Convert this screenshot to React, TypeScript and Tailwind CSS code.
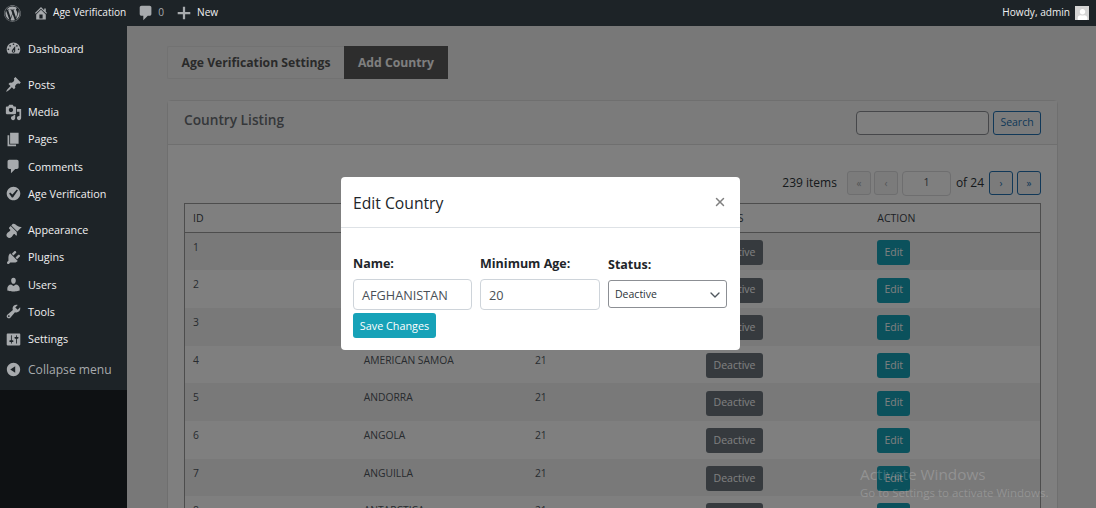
import React from "react";
import { X, ChevronDown } from "lucide-react";
import { FaWordpress, FaUser } from "react-icons/fa";

// dashicons, 20x20 box
const PATHS = {
  home: "M16 8.5l1.53 1.53-1.06 1.06L10 4.62l-6.47 6.47-1.06-1.06L10 2.5l4 4v-2h2v4zm-6-2.46l6 5.99V18H4v-5.97zM12 17v-5H8v5h4z",
  comment: "M5 2h9c1.1 0 2 .9 2 2v7c0 1.1-.9 2-2 2h-2l-5 5v-5H5c-1.1 0-2-.9-2-2V4c0-1.1.9-2 2-2z",
  plus: "M17 8.75v2.5h-5.75V17h-2.5v-5.75H3v-2.5h5.75V3h2.5v5.75H17z",
  dashboard:
    "M3.76 16h12.48c1.1-1.37 1.76-3.11 1.76-5 0-4.42-3.58-8-8-8s-8 3.58-8 8c0 1.89.66 3.63 1.76 5zM10 4c.55 0 1 .45 1 1s-.45 1-1 1-1-.45-1-1 .45-1 1-1zM6 6c.55 0 1 .45 1 1s-.45 1-1 1-1-.45-1-1 .45-1 1-1zm8 0c.55 0 1 .45 1 1s-.45 1-1 1-1-.45-1-1 .45-1 1-1zm-5.37 5.55L12 7v6c0 1.1-.9 2-2 2s-2-.9-2-2c0-.57.24-1.08.63-1.45zM4 10c.55 0 1 .45 1 1s-.45 1-1 1-1-.45-1-1 .45-1 1-1zm12 0c.55 0 1 .45 1 1s-.45 1-1 1-1-.45-1-1 .45-1 1-1zm-5 3c0-.55-.45-1-1-1s-1 .45-1 1 .45 1 1 1 1-.45 1-1z",
  post: "M10.44 3.02l1.82-1.82 6.36 6.35-1.83 1.82c-1.05-.68-2.48-.57-3.41.36l-.75.75c-.92.93-1.04 2.35-.35 3.41l-1.83 1.82-2.41-2.41-2.8 2.79c-.42.42-3.38 2.71-3.8 2.29s1.86-3.39 2.28-3.81l2.79-2.79L4.1 9.36l1.83-1.82c1.05.69 2.48.57 3.4-.36l.75-.75c.93-.92 1.05-2.35.36-3.41z",
  media:
    "M13 11V4c0-.55-.45-1-1-1h-1.67L9 1H5L3.67 3H2c-.55 0-1 .45-1 1v7c0 .55.45 1 1 1h10c.55 0 1-.45 1-1zM7 4.5c1.38 0 2.5 1.12 2.5 2.5S8.38 9.5 7 9.5 4.5 8.38 4.5 7 5.62 4.5 7 4.5zM14 6h5v10.5c0 1.38-1.12 2.5-2.5 2.5S14 17.88 14 16.5s1.12-2.5 2.5-2.5c.17 0 .34.02.5.05V9h-3V6zm-4 8.05V13h2v3.5c0 1.38-1.12 2.5-2.5 2.5S7 17.88 7 16.5 8.12 14 9.5 14c.17 0 .34.02.5.05z",
  page: "M6 15V2h10v13H6zm-1 1h8v2H3V5h2v11z",
  check:
    "M10 2c-4.42 0-8 3.58-8 8s3.58 8 8 8 8-3.58 8-8-3.58-8-8-8zm-.615 12.66h-1.34l-3.24-4.54 1.34-1.25 2.57 2.4 5.14-5.93 1.34.94-5.81 8.38z",
  appearance:
    "M14.48 11.06L7.41 3.99l1.5-1.5c.5-.56 2.3-.47 3.51.32 1.21.8 1.43 1.28 2.91 2.1 1.18.64 2.45 1.26 4.45.85zm-.71.71L6.7 4.7 4.93 6.47c-.39.39-.39 1.02 0 1.41l1.06 1.06c.39.39.39 1.03 0 1.42-.6.6-1.43 1.11-2.21 1.69-.35.26-.7.53-1.01.84-1.43 1.43-1.4 3.52-.04 4.88 1.36 1.36 3.45 1.39 4.88-.04.31-.31.58-.66.84-1.01.58-.78 1.09-1.61 1.69-2.21.39-.39 1.03-.39 1.42 0l1.06 1.06c.39.39 1.02.39 1.41 0z",
  plugins:
    "M13.11 4.36L9.87 7.6 8 5.73l3.24-3.24c.35-.34 1.05-.2 1.56.32.52.51.66 1.21.31 1.55zm-8 1.77l.91-1.12 9.01 9.01-1.19.84c-.71.71-2.63 1.16-3.82 1.16H6.14L4.9 17.26c-.59.59-1.54.59-2.12 0-.59-.58-.59-1.53 0-2.12l1.24-1.24v-3.88c0-1.13.4-3.19 1.09-3.89zm7.26 3.97l3.24-3.24c.34-.35 1.04-.21 1.55.31.52.51.66 1.21.31 1.55l-3.24 3.25z",
  users:
    "M10 9.25c-2.27 0-2.73-3.44-2.73-3.44C7 4.02 7.82 2 9.97 2c2.16 0 2.98 2.02 2.71 3.81 0 0-.41 3.44-2.68 3.44zm0 2.57L12.72 10c2.39 0 4.52 2.33 4.52 4.53v2.49s-3.65 1.13-7.24 1.13c-3.65 0-7.24-1.13-7.24-1.13v-2.49c0-2.25 1.94-4.48 4.47-4.48z",
  tools:
    "M16.68 9.77c-1.34 1.34-3.3 1.67-4.95.99l-5.41 6.52c-.99.99-2.59.99-3.58 0s-.99-2.59 0-3.57l6.52-5.42c-.68-1.65-.35-3.61.99-4.95 1.28-1.28 3.12-1.62 4.72-1.06l-2.89 2.89 2.82 2.82 2.86-2.87c.53 1.58.18 3.39-1.08 4.65zM3.81 16.21c.4.39 1.04.39 1.43 0 .4-.4.4-1.04 0-1.43-.39-.4-1.03-.4-1.43 0-.39.39-.39 1.03 0 1.43z",
  settings:
    "M18 16V4c0-.55-.45-1-1-1H3c-.55 0-1 .45-1 1v12c0 .55.45 1 1 1h14c.55 0 1-.45 1-1zM8 11h1c.55 0 1 .45 1 1s-.45 1-1 1H8v1.5c0 .28-.22.5-.5.5s-.5-.22-.5-.5V13H6c-.55 0-1-.45-1-1s.45-1 1-1h1V5.5c0-.28.22-.5.5-.5s.5.22.5.5V11zm5-2h-1c-.55 0-1-.45-1-1s.45-1 1-1h1V5.5c0-.28.22-.5.5-.5s.5.22.5.5V7h1c.55 0 1 .45 1 1s-.45 1-1 1h-1v5.5c0 .28-.22.5-.5.5s-.5-.22-.5-.5V9z",
  collapse: "M10 2.16c4.33 0 7.84 3.51 7.84 7.84s-3.51 7.84-7.84 7.84S2.16 14.33 2.16 10 5.71 2.16 10 2.16zm2 11.72V6.12L6.18 9.97z",
};

type IconName = keyof typeof PATHS;

function Dashicon({ name, className }: { name: IconName; className?: string }) {
  return (
    <svg viewBox="0 0 20 20" fill="currentColor" className={className}>
      <path d={PATHS[name]} />
    </svg>
  );
}

const MENU_TOP: { label: string; icon: IconName }[] = [{ label: "Dashboard", icon: "dashboard" }];
const MENU_CONTENT: { label: string; icon: IconName }[] = [
  { label: "Posts", icon: "post" },
  { label: "Media", icon: "media" },
  { label: "Pages", icon: "page" },
  { label: "Comments", icon: "comment" },
  { label: "Age Verification", icon: "check" },
];
const MENU_ADMIN: { label: string; icon: IconName }[] = [
  { label: "Appearance", icon: "appearance" },
  { label: "Plugins", icon: "plugins" },
  { label: "Users", icon: "users" },
  { label: "Tools", icon: "tools" },
  { label: "Settings", icon: "settings" },
];

// names of rows 1-3 sit behind the modal
const ROWS = [
  { id: 1, name: "", age: "" },
  { id: 2, name: "", age: "" },
  { id: 3, name: "", age: "" },
  { id: 4, name: "AMERICAN SAMOA", age: "21" },
  { id: 5, name: "ANDORRA", age: "21" },
  { id: 6, name: "ANGOLA", age: "21" },
  { id: 7, name: "ANGUILLA", age: "21" },
  { id: 8, name: "ANTARCTICA", age: "21" },
];

function MenuGroup({ items }: { items: { label: string; icon: IconName }[] }) {
  return (
    <ul className="mb-[9px]">
      {items.map(({ label, icon }) => (
        <li key={label} className="flex h-[27.25px] items-center text-[10.8px] text-[#f0f0f1]">
          <span className="flex w-[28px] pl-[5px]">
            <Dashicon name={icon} className="h-[17px] w-[17px] text-[#a7aaad]" />
          </span>
          <span>{label}</span>
        </li>
      ))}
    </ul>
  );
}

function PageButton({ children, on }: { children: string; on?: boolean }) {
  return (
    <span
      className={`flex h-[24px] w-[24px] items-center justify-center rounded-[3px] border text-[10px] ${
        on ? "border-[#2271b1] bg-[#f6f7f7] text-[#2271b1]" : "border-[#dcdcde] bg-[#f6f7f7] text-[#a7aaad]"
      }`}
    >
      {children}
    </span>
  );
}

export default function App() {
  return (
    <div className="relative h-[508px] w-[1096px] overflow-hidden bg-[#f0f0f1] font-['Open_Sans','Noto_Sans',sans-serif] text-[#212529]">
      {/* Page under the dim layer */}
      <div className="flex h-full pt-[26px]">
        <div className="w-[127px] shrink-0 bg-[#1d2327]" />
        <main className="min-w-0 flex-1 pl-[40px] pr-[38px] pt-[20px]">
          <div className="flex h-[33px] w-fit text-[12.2px] font-bold">
            <span className="flex w-[177px] items-center justify-center rounded-l-[2px] border border-r-0 border-[#e4e4e4] bg-[#f3f3f3] pt-[2px] text-[#555555]">
              Age Verification Settings
            </span>
            <span className="flex w-[104px] items-center justify-center bg-[#5a5a5a] pt-[2px] text-white">Add Country</span>
          </div>

          <section className="mt-[21px] rounded-t-[4px] border border-[#dfdfdf] bg-white">
            <header className="flex h-[44px] items-center justify-between border-b border-[#dfdfdf] bg-[#f7f7f7] pl-[16px] pr-[16px]">
              <h2 className="pb-[5px] text-[13.7px] font-semibold text-[#6a6f74]">Country Listing</h2>
              <div className="flex gap-[4px]">
                <span className="h-[24px] w-[133px] rounded-[4px] border border-[#8c8f94] bg-white" />
                <span className="flex h-[24px] w-[48px] items-center justify-center rounded-[3px] border border-[#2271b1] bg-[#f6f7f7] text-[10.5px] text-[#2271b1]">
                  Search
                </span>
              </div>
            </header>

            <div className="px-[16px] pt-[26px]">
              <div className="flex h-[24px] items-center justify-end text-[12px] text-[#2c3338]">
                <span className="mr-[10px]">239 items</span>
                <span className="flex gap-[3px]">
                  <PageButton>«</PageButton>
                  <PageButton>‹</PageButton>
                </span>
                <span className="ml-[4px] flex h-[25px] w-[49px] items-center justify-center rounded-[4px] border border-[#dcdcde] bg-white text-[10.5px] text-[#50575e]">
                  1
                </span>
                <span className="mx-[5px]">of 24</span>
                <span className="flex gap-[4px]">
                  <PageButton on>›</PageButton>
                  <PageButton on>»</PageButton>
                </span>
              </div>

              <table className="mt-[8px] w-full table-fixed border border-[#9a9a9a] text-[10.3px] text-[#50575e]">
                <thead>
                  <tr className="h-[29px] border-b border-[#9a9a9a] text-left text-[10.5px] text-[#3c434a]">
                    <th className="pl-[8px] pt-[2px] font-normal">ID</th>
                    <th className="pl-[8px] pt-[2px] font-normal">NAME</th>
                    <th className="pl-[8px] pt-[2px] font-normal">MINIMUM AGE</th>
                    <th className="pl-[8px] pt-[2px] font-normal">STATUS</th>
                    <th className="pl-[8px] pt-[2px] font-normal">ACTION</th>
                  </tr>
                </thead>
                <tbody>
                  {ROWS.map((row) => (
                    <tr key={row.id} className="h-[37.7px] odd:bg-[#f2f2f2]">
                      <td className="pl-[8px] pb-[8px]">{row.id}</td>
                      <td className="pl-[8px] pb-[8px]">{row.name}</td>
                      <td className="pl-[8px] pb-[8px]">{row.age}</td>
                      <td className="pl-[8px] pt-[2px]">
                        <span className="inline-flex h-[25px] w-[57px] items-center justify-center rounded-[3px] bg-[#6c757d] text-[10.5px] text-white">
                          Deactive
                        </span>
                      </td>
                      <td className="pl-[8px] pt-[2px]">
                        <span className="inline-flex h-[25px] w-[33px] items-center justify-center rounded-[3px] bg-[#17a2b8] text-[10.5px] text-white">
                          Edit
                        </span>
                      </td>
                    </tr>
                  ))}
                </tbody>
              </table>
            </div>
          </section>
        </main>
      </div>

      {/* Dim layer */}
      <div className="absolute inset-0 bg-black/50" />

      {/* Admin bar and menu stay above the dim layer */}
      <div className="absolute inset-x-0 top-0 flex h-[26px] items-center justify-between bg-[#1d2327] pl-[4px] pr-[7px] text-[10.1px] text-[#f0f0f1]">
        <div className="flex items-center">
          <FaWordpress className="h-[17px] w-[17px] text-[#a7aaad]" />
          <Dashicon name="home" className="ml-[12px] h-[16px] w-[16px] text-[#a7aaad]" />
          <span className="ml-[4px]">Age Verification</span>
          <Dashicon name="comment" className="ml-[11px] h-[18px] w-[18px] text-[#a7aaad]" />
          <span className="ml-[3px] text-[#a7aaad]">0</span>
          <Dashicon name="plus" className="ml-[11px] h-[18px] w-[18px] text-[#a7aaad]" />
          <span className="ml-[4px]">New</span>
        </div>
        <div className="flex items-center gap-[5px]">
          <span>Howdy, admin</span>
          <span className="flex h-[14px] w-[14px] items-end justify-center bg-[#d4d4d4]">
            <FaUser className="h-[11px] w-[11px] text-white" />
          </span>
        </div>
      </div>

      <nav className="absolute left-0 top-[26px] h-[364px] w-[127px] bg-[#1d2327] pt-[9px]">
        <MenuGroup items={MENU_TOP} />
        <MenuGroup items={MENU_CONTENT} />
        <MenuGroup items={MENU_ADMIN} />
        <div className="-mt-[4px] flex h-[24px] items-center text-[12.1px] text-[#a7aaad]">
          <span className="flex w-[28px] pl-[5px]">
            <Dashicon name="collapse" className="h-[17px] w-[17px]" />
          </span>
          <span>Collapse menu</span>
        </div>
      </nav>

      {/* Edit modal */}
      <div className="absolute left-[341px] top-[177px] h-[173px] w-[399px] rounded-[4px] bg-white">
        <div className="flex h-[51px] items-center justify-between border-b border-[#dee2e6] pl-[12px] pr-[13px]">
          <h3 className="pt-[3px] text-[15.7px] font-medium text-[#212529]">Edit Country</h3>
          <X className="h-[14px] w-[14px] text-[#808080]" strokeWidth={2.5} />
        </div>
        <div className="flex gap-[8px] pl-[12px] pt-[26px] text-[12.5px]">
          <div className="w-[119px]">
            <label className="block h-[25px] font-bold leading-[20px]">Name:</label>
            <div className="flex h-[31px] items-center rounded-[4px] border border-[#ced4da] pl-[8px] pt-[2px] text-[12.7px] text-[#495057]">
              AFGHANISTAN
            </div>
          </div>
          <div className="w-[120px]">
            <label className="block h-[25px] font-bold leading-[20px]">Minimum Age:</label>
            <div className="flex h-[31px] items-center rounded-[4px] border border-[#ced4da] pl-[8px] pt-[2px] text-[12.7px] text-[#495057]">
              20
            </div>
          </div>
          <div className="w-[119px]">
            <label className="block h-[26px] font-bold leading-[22px]">Status:</label>
            <div className="flex h-[28px] items-center justify-between rounded-[3px] border border-[#8c8f94] pl-[6px] pr-[3px] pt-[1px] text-[10.5px] text-[#2c3338]">
              Deactive
              <ChevronDown className="h-[16px] w-[16px] text-[#50575e]" strokeWidth={2} />
            </div>
          </div>
        </div>
        <button className="ml-[12px] mt-[3px] flex h-[25px] w-[83px] items-center justify-center rounded-[3px] bg-[#17a2b8] pt-[1px] text-[10.8px] text-white">
          Save Changes
        </button>
      </div>

      {/* Windows watermark */}
      <div className="pointer-events-none absolute left-[860px] top-[464px] text-white/20">
        <div className="text-[15.3px] leading-[20px]">Activate Windows</div>
        <div className="text-[11.5px] leading-[17px]">Go to Settings to activate Windows.</div>
      </div>
    </div>
  );
}
